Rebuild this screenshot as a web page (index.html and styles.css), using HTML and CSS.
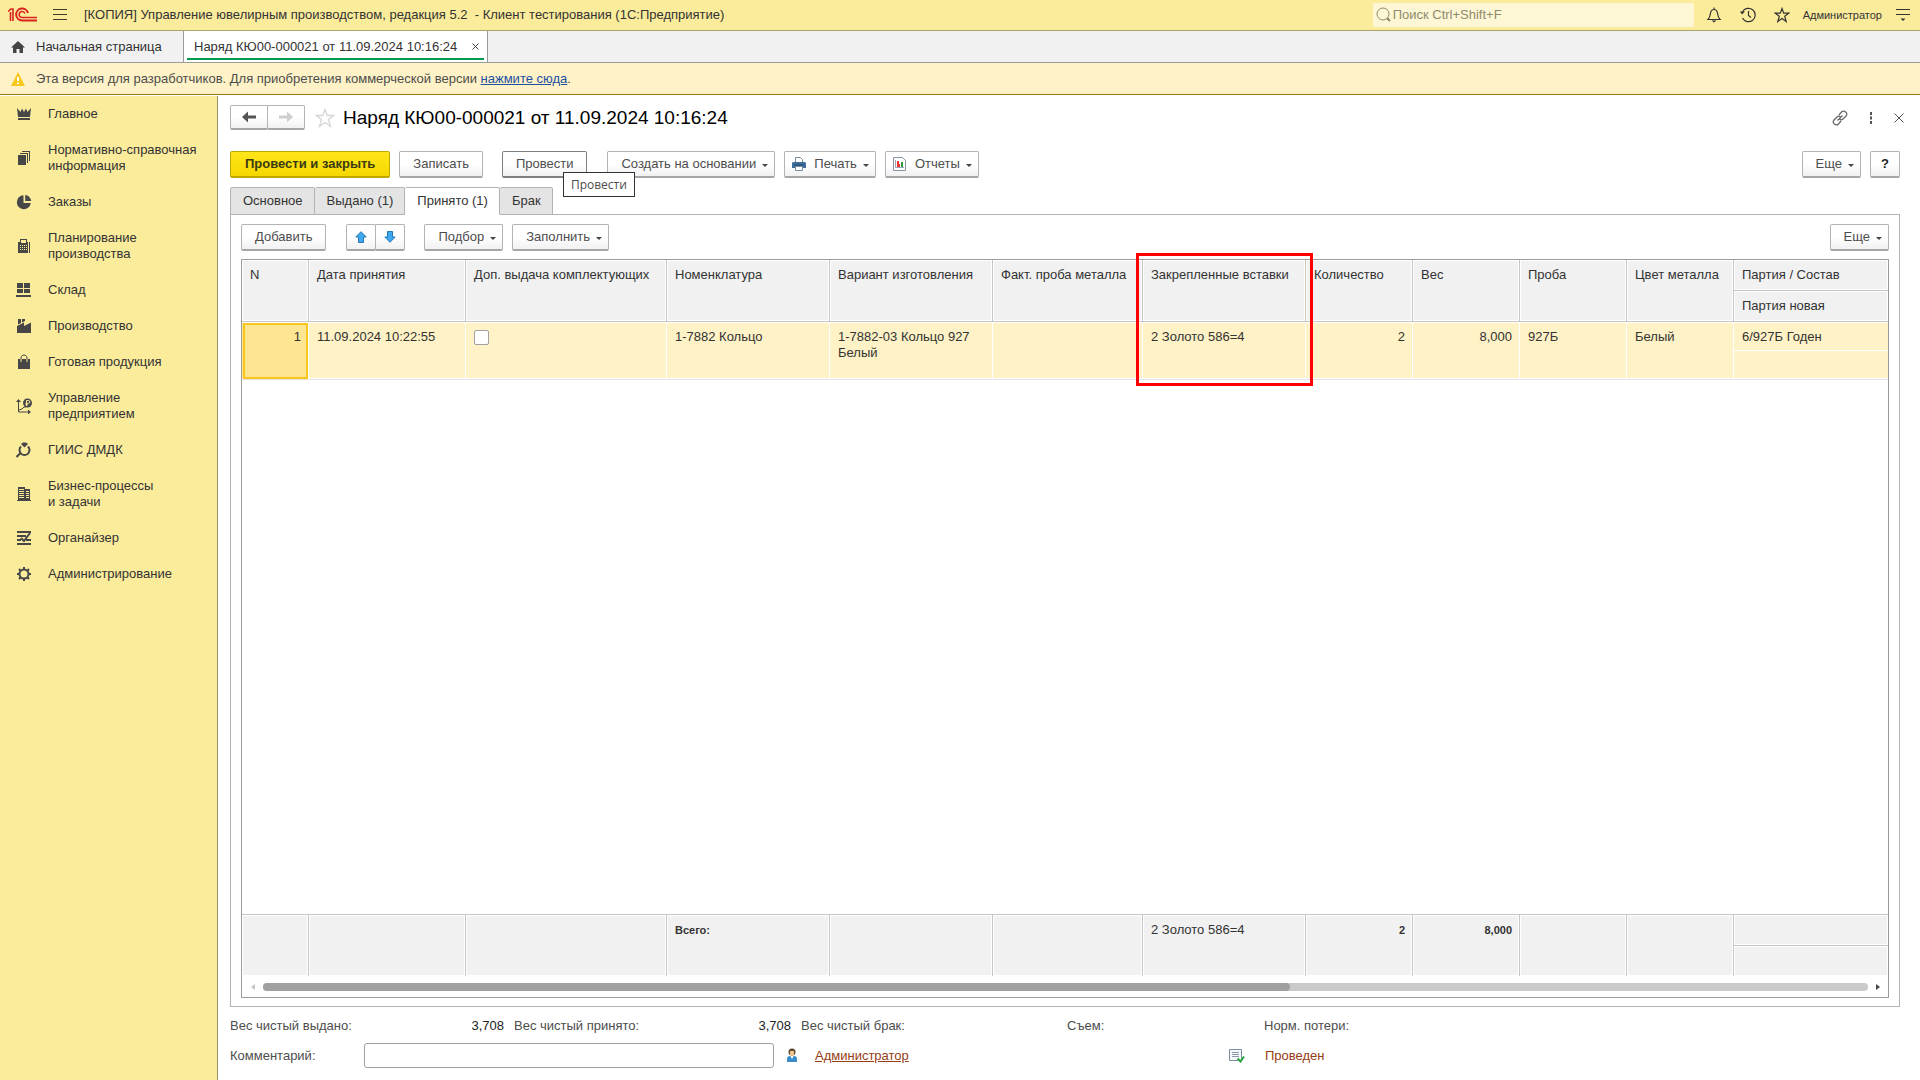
FILE: index.html
```html
<!DOCTYPE html>
<html lang="ru">
<head>
<meta charset="utf-8">
<title>Наряд КЮ00-000021 от 11.09.2024 10:16:24</title>
<link rel="stylesheet" href="styles.css">
</head>
<body>
<header class="topbar">
  <svg class="logo" width="30" height="16" viewBox="0 0 30 16" fill="none" stroke="#d8231f" stroke-width="2"><path d="M0 4.500 3 2h2v12M2.500 5V14" stroke-width="1.600"/><path d="M20 6A6 6 0 1 0 14 13.500H29"/><path d="M17 6.500A3 3 0 1 0 14 10.500H29" stroke-width="1.500"/></svg>
  <button class="icon-btn menu-btn" aria-label="Меню"><svg width="14" height="12" viewBox="0 0 14 12" stroke="#3c3a28"><path d="M0 .5h14M0 5.500h14M0 10.500h14"/></svg></button>
  <div class="app-title">[КОПИЯ] Управление ювелирным производством, редакция 5.2&nbsp; - Клиент тестирования&nbsp;(1С:Предприятие)</div>
  <label class="search">
    <svg width="16" height="16" viewBox="0 0 16 16" fill="none" stroke="#8f8a6c"><circle cx="8" cy="7" r="6"/><path d="m12 11 3 3" stroke-width="2.200"/></svg>
    <input type="text" placeholder="Поиск Ctrl+Shift+F" aria-label="Поиск">
  </label>
  <div class="top-actions">
    <button class="icon-btn" aria-label="Уведомления"><svg width="16" height="16" viewBox="0 0 16 16" fill="none" stroke="#333" stroke-width="1.200"><path d="M2 12.500C4 10.500 4 9 4.500 6 5 3.500 6 2.500 8 2.500s3 1 3.500 3.500c.5 3 .5 4.500 2.500 6.500zM8 .5v2"/><path d="M5.500 13.500h5L8 15.500z" fill="#333" stroke="none"/></svg></button>
    <button class="icon-btn" aria-label="История"><svg width="16" height="16" viewBox="0 0 16 16" fill="none" stroke="#333" stroke-width="1.200"><path d="M2.500 5A6.700 6.700 0 1 1 2.500 11M8.500 4v4.500l2.500 2"/><path d="M0 4.500h5L2 7.500z" fill="#333" stroke="none"/></svg></button>
    <button class="icon-btn" aria-label="Избранное"><svg width="16" height="16" viewBox="0 0 16 16" fill="none" stroke="#333" stroke-width="1.200"><path d="m8 1.500 1.700 4.700h5l-4 3 1.500 5.300L8 11.500l-4.200 3 1.500-5.300-4-3h5z"/></svg></button>
    <button class="user-btn">Администратор</button>
    <button class="icon-btn" aria-label="Настройки"><svg width="14" height="14" viewBox="0 0 14 14" stroke="#333"><path d="M0 1.500h14M0 6.500h14"/><path d="M4.500 10.500h5L7 13z" fill="#333" stroke="none"/></svg></button>
  </div>
</header>

<nav class="window-tabs">
  <a class="window-tab home" href="#"><svg width="14" height="12" viewBox="0 0 14 12" fill="#444"><path d="M7 0 0 6.500h2V12h3.500V8h3v4H12V6.500h2z"/></svg>Начальная страница</a>
  <div class="window-tab current"><a href="#">Наряд КЮ00-000021 от 11.09.2024 10:16:24</a><button class="icon-btn" aria-label="Закрыть вкладку"><svg width="7" height="7" viewBox="0 0 7 7" stroke="#444"><path d="m.5.5 6 6m0-6-6 6"/></svg></button></div>
</nav>

<div class="notice">
  <svg width="14" height="14" viewBox="0 0 14 14"><path d="M7 0 14 14H0z" fill="#f9c81e"/><path d="M6 5h2v4H6zM6 10.500h2v1.500H6z" fill="#fff"/></svg>
  <span>Эта версия для разработчиков. Для приобретения коммерческой версии <a href="#">нажмите сюда</a>.</span>
</div>

<div class="workspace">
  <nav class="sidebar">
    <a href="#"><svg width="16" height="16" viewBox="0 0 16 16"><path d="m1 2 3.500 4L6 2.500 8 6l2-3.500L11.500 6 15 2l-1 9H2zM2 12h12v2H2z"/></svg>Главное</a>
    <a href="#"><svg width="16" height="16" viewBox="0 0 16 16"><path d="M2 5h8v10H2zM4 3h8v10h-1V4H4zM6 1h8v10h-1V2H6z"/></svg>Нормативно-справочная<br>информация</a>
    <a href="#"><svg width="16" height="16" viewBox="0 0 16 16"><path d="M7.500 1.200A7 7 0 1 0 14.800 9H7.500zM9.200 1v6h6A6.500 6.500 0 0 0 9.200 1z"/></svg>Заказы</a>
    <a href="#"><svg width="16" height="16" viewBox="0 0 16 16"><path fill-rule="evenodd" d="M4 1h7v3h1v11H2V4h2zm1 1v3h5V2zM4 7v1h1V7zm2 0v1h1V7zm2 0v1h1V7zm2 0v1h1V7zM4 9v1h1V9zm2 0v1h1V9zm2 0v1h1V9zm2 0v1h1V9zm-6 2v1h1v-1zm2 0v1h1v-1zm2 0v1h1v-1zm2 0v1h1v-1zM13 4h1v11h-1z"/></svg>Планирование<br>производства</a>
    <a href="#"><svg width="16" height="16" viewBox="0 0 16 16"><path d="M1 1h6v5H1zM8 1h6v5H8zM1 7h6v4H1zM8 7h6v4H8zM0 13h15v2H0z"/></svg>Склад</a>
    <a href="#"><svg width="16" height="16" viewBox="0 0 16 16"><path d="M1 15V8l7-3.500V8l7-3.500V15zM2 1h3v4L2 6.500zM6 1h3v2L6 4.500z"/></svg>Производство</a>
    <a href="#"><svg width="16" height="16" viewBox="0 0 16 16"><path d="M2 5h12v10H2z"/><path d="M5 7V4c0-4 6-4 6 0v3" fill="none" stroke="#474747"/><path d="M5 5v3M11 5v3" stroke="#fbec9c" fill="none"/></svg>Готовая продукция</a>
    <a href="#"><svg width="16" height="16" viewBox="0 0 16 16"><path d="m2.500 1 2.500 3H0zM15 14l-3 2.500V11.500z"/><path d="M2.500 3v11H13M3 12l3-1 2-2h2" fill="none" stroke="#474747"/><circle cx="11.500" cy="5" r="4.500"/><path d="M10.500 8V2.500h2a1.200 1.200 0 0 1 0 2.800h-3M9.500 6.800H12" fill="none" stroke="#fbec9c"/></svg>Управление<br>предприятием</a>
    <a href="#"><svg width="16" height="16" viewBox="0 0 16 16"><path d="M5 2l2-1.500h3L12 2 8.500 5.500z"/><path d="M5 4.500a5 5 0 1 0 7 0M4 11.500.5 15" fill="none" stroke="#474747" stroke-width="2"/></svg>ГИИС ДМДК</a>
    <a href="#"><svg width="16" height="16" viewBox="0 0 16 16"><path fill-rule="evenodd" d="M2 1h7v13H2zm1 2v1h5V3zm0 2v1h5V5zm0 2v1h5V7zm0 2v1h5V9zm0 2v1h5v-1zM9 3h5v11H9zm1 2v1h3V5zm0 2v1h3V7zm0 2v1h3V9zm0 2v1h3v-1zM1 14h14v1H1z"/></svg>Бизнес-процессы<br>и задачи</a>
    <a href="#"><svg width="16" height="16" viewBox="0 0 16 16"><path d="M1 1h14v2H1zM1 5h9v2H1zM1 9h4v2H1zM10 9h5v2h-5zM1 13h14v2H1z"/><path d="m5 8 3 3 6-8" fill="none" stroke="#474747" stroke-width="2"/></svg>Органайзер</a>
    <a href="#"><svg width="16" height="16" viewBox="0 0 16 16"><g fill="none" stroke="#474747" stroke-width="2"><circle cx="8" cy="8" r="4.500"/><path d="M8 1v2.500M8 12.500V15M1 8h2.500M12.500 8H15M3 3l2 2M11 11l2 2M13 3l-2 2M5 11l-2 2"/></g></svg>Администрирование</a>
  </nav>

  <main class="form">
    <div class="form-head">
      <div class="button-pair nav-pair">
        <button class="btn" aria-label="Назад"><svg width="14" height="12" viewBox="0 0 14 12" fill="#555"><path d="M0 6 6 .5V4.500h8v3H6v4z"/></svg></button>
        <button class="btn" aria-label="Вперед"><svg width="14" height="12" viewBox="0 0 14 12" fill="#cfcfcf"><path d="M14 6 8 .5V4.500H0v3h8v4z"/></svg></button>
      </div>
      <button class="icon-btn" aria-label="В избранное"><svg width="20" height="20" viewBox="0 0 20 20" fill="none" stroke="#d6d6d6" stroke-width="1.300"><path d="m10 1.500 2.200 6h6.300l-5 4 2 6.800L10 14.500l-5.500 3.800 2-6.800-5-4h6.300z"/></svg></button>
      <h1>Наряд КЮ00-000021 от 11.09.2024 10:16:24</h1>
      <div class="head-tools">
        <button class="icon-btn" aria-label="Ссылка"><svg width="16" height="16" viewBox="0 0 16 16" fill="none" stroke="#666" stroke-width="1.200"><path d="m7 5 2.500-3c2.500-2.500 7 1 4.500 4l-3 3c-1 1-2.500 1-3.500 0M9 11l-2.500 3C4 16.500-.5 13 2 10l3-3c1-1 2.500-1 3.500 0M5.500 10.500l5-5"/></svg></button>
        <button class="icon-btn" aria-label="Дополнительно"><svg width="4" height="12" viewBox="0 0 4 12" fill="#555"><path d="M1 0h2v3H1zM1 4.500h2v3H1zM1 9h2v3H1z"/></svg></button>
        <button class="icon-btn" aria-label="Закрыть"><svg width="10" height="10" viewBox="0 0 10 10" stroke="#555"><path d="m.5.5 9 9m0-9-9 9"/></svg></button>
      </div>
    </div>

    <div class="commands">
      <button class="btn primary">Провести и закрыть</button>
      <button class="btn">Записать</button>
      <div class="post"><button class="btn hovered" aria-describedby="tip">Провести</button><div class="tooltip" role="tooltip" id="tip">Провести</div></div>
      <button class="btn drop">Создать на основании</button>
      <button class="btn drop with-icon"><svg width="14" height="14" viewBox="0 0 14 14"><path d="M3.500 5V.5h5l2 2V5" fill="#fff" stroke="#7a8ca0"/><path d="M1 5h12l1 1v5H0V6z" fill="#3f6d9c"/><path d="M2 8h10" stroke="#1f4468"/><path d="M3.500 9.500h7v4h-7z" fill="#fff" stroke="#7a8ca0"/></svg>Печать</button>
      <button class="btn drop with-icon"><svg width="14" height="14" viewBox="0 0 14 14"><path d="M.5.5h9l3 3v10H.5z" fill="#fff" stroke="#8593a3"/><path d="M2.500 3v7.500H11" fill="none" stroke="#9aa6b3"/><path d="M4 4h2v6H4z" fill="#e33"/><path d="M6 7h1v3H6z" fill="#e33"/><path d="M8 5h2v5H8z" fill="#2a9a3a"/></svg>Отчеты</button>
      <button class="btn drop push">Еще</button>
      <button class="btn help">?</button>
    </div>

    <div class="page-tabs" role="tablist">
      <button role="tab">Основное</button><button role="tab">Выдано (1)</button><button role="tab" aria-selected="true">Принято (1)</button><button role="tab">Брак</button>
    </div>

    <section class="page">
      <div class="table-tools">
        <button class="btn">Добавить</button>
        <div class="button-pair move-pair">
          <button class="btn" aria-label="Вверх"><svg width="12" height="12" viewBox="0 0 12 12" fill="#3fa9f0" stroke="#2477b3"><path d="m6 .7 5.200 5.300H8.500v5.500h-5V6H.8z"/></svg></button>
          <button class="btn" aria-label="Вниз"><svg width="12" height="12" viewBox="0 0 12 12" fill="#3fa9f0" stroke="#2477b3"><path d="M6 11.300.8 6h2.700V.5h5V6h2.700z"/></svg></button>
        </div>
        <button class="btn drop">Подбор</button>
        <button class="btn drop">Заполнить</button>
        <button class="btn drop push">Еще</button>
      </div>

      <div class="grid">
        <div class="grid-body">
        <table>
          <colgroup><col class="c-n"><col class="c-date"><col class="c-extra"><col class="c-item"><col class="c-item"><col class="c-fact"><col class="c-item"><col class="c-num"><col class="c-num"><col class="c-num"><col class="c-num"><col></colgroup>
          <thead>
            <tr><th rowspan="2">N</th><th rowspan="2">Дата принятия</th><th rowspan="2">Доп. выдача комплектующих</th><th rowspan="2">Номенклатура</th><th rowspan="2">Вариант изготовления</th><th rowspan="2">Факт. проба металла</th><th rowspan="2" class="marked">Закрепленные вставки<span class="marker"></span></th><th rowspan="2">Количество</th><th rowspan="2">Вес</th><th rowspan="2">Проба</th><th rowspan="2">Цвет металла</th><th>Партия / Состав</th></tr>
            <tr><th>Партия новая</th></tr>
          </thead>
          <tbody>
            <tr><td rowspan="2" class="num active">1</td><td rowspan="2">11.09.2024 10:22:55</td><td rowspan="2"><input type="checkbox" aria-label="Доп. выдача комплектующих"></td><td rowspan="2">1-7882 Кольцо</td><td rowspan="2">1-7882-03 Кольцо 927 Белый</td><td rowspan="2"></td><td rowspan="2">2 Золото 586=4</td><td rowspan="2" class="num">2</td><td rowspan="2" class="num">8,000</td><td rowspan="2">927Б</td><td rowspan="2">Белый</td><td class="upper">6/927Б Годен</td></tr>
            <tr><td class="lower"></td></tr>
            <tr class="filler"><td colspan="12"></td></tr>
          </tbody>
          <tfoot>
            <tr><td rowspan="2"></td><td rowspan="2"></td><td rowspan="2"></td><td rowspan="2" class="total">Всего:</td><td rowspan="2"></td><td rowspan="2"></td><td rowspan="2">2 Золото 586=4</td><td rowspan="2" class="num total">2</td><td rowspan="2" class="num total">8,000</td><td rowspan="2"></td><td rowspan="2"></td><td></td></tr>
            <tr><td></td></tr>
          </tfoot>
        </table>
        </div>
        <div class="scroll">
          <svg width="4" height="6" viewBox="0 0 4 6" fill="#c4c4c4"><path d="M4 0v6L0 3z"/></svg>
          <div class="track"><div class="thumb"></div></div>
          <svg width="4" height="6" viewBox="0 0 4 6" fill="#444"><path d="M0 0v6l4-3z"/></svg>
        </div>
      </div>
    </section>

    <footer class="summary">
      <dl class="weights">
        <div><dt>Вес чистый выдано:</dt><dd>3,708</dd></div>
        <div><dt>Вес чистый принято:</dt><dd>3,708</dd></div>
        <div><dt>Вес чистый брак:</dt><dd></dd></div>
        <div><dt>Съем:</dt><dd></dd></div>
        <div><dt>Норм. потери:</dt><dd></dd></div>
      </dl>
      <div class="comment-row">
        <label for="comment">Комментарий:</label>
        <input type="text" id="comment">
        <a class="author" href="#"><svg width="10" height="16" viewBox="0 0 10 16"><circle cx="5" cy="4" r="3.500" fill="#5a4630"/><path d="M3 3h4v4.500H3z" fill="#f2c48c"/><path d="M0 14V11q0-3 3-3h4q3 0 3 3v3z" fill="#3a8fc8"/><path d="m3.500 8 1.500 3 1.500-3z" fill="#fff"/></svg><span>Администратор</span></a>
        <div class="status"><svg width="16" height="14" viewBox="0 0 16 14"><path d="M.5.5h12v11H.5z" fill="#f5f8fb" stroke="#7c8ea3"/><path d="M3 3.500h7M3 5.500h7M3 7.500h7" stroke="#8c9aab"/><path d="m8.500 9.500 3 3L15 7.500" fill="none" stroke="#27a53a" stroke-width="2"/></svg><span>Проведен</span></div>
      </div>
    </footer>
  </main>
</div>
</body>
</html>
```
FILE: styles.css
```css
* { box-sizing: border-box; }
html, body { height: 100%; }
body {
  margin: 0;
  display: flex;
  flex-direction: column;
  font: 13px/16px "Liberation Sans", Arial, sans-serif;
  color: #333;
  background: #fff;
}
svg { display: block; flex: none; }
button, input { font: inherit; color: inherit; }
.icon-btn, .user-btn { padding: 0; border: 0; background: none; }

.topbar {
  display: flex;
  align-items: center;
  height: 31px;
  padding: 0 10px 0 8px;
  background: #fbec9c;
  border-bottom: 1px solid #aaa46c;
}
.menu-btn { margin: 0 17px 0 15px; }
.app-title { flex: 1; white-space: nowrap; }
.search {
  display: flex;
  align-items: center;
  gap: 2px;
  width: 321px;
  height: 24px;
  padding: 0 2px;
  border-radius: 2px;
  background: #fdf7d6;
}
.search input { flex: 1; min-width: 0; padding: 0; border: 0; background: none; outline: 0; }
.search input::placeholder { color: #8f8a6c; opacity: 1; }
.top-actions { display: flex; align-items: center; gap: 18px; margin-left: 12px; }
.user-btn { font-size: 11px; margin: 0 -4px 0 -5px; }

.window-tabs { display: flex; height: 32px; background: #f1f1f1; border-bottom: 1px solid #9c9c9c; }
.window-tab { display: flex; align-items: center; color: #333; }
.window-tab a { color: inherit; text-decoration: none; }
.window-tab.home { width: 184px; gap: 11px; padding-left: 11px; border-right: 1px solid #9c9c9c; text-decoration: none; white-space: nowrap; }
.window-tab.current {
  position: relative;
  gap: 15px;
  padding: 0 8px 0 10px;
  background: #fff;
  border-right: 1px solid #9c9c9c;
}
.window-tab.current::after { content: ""; position: absolute; left: 3px; right: 3px; bottom: 2px; height: 2px; background: #009a4e; }

.notice {
  display: flex;
  align-items: center;
  gap: 11px;
  height: 32px;
  padding-left: 11px;
  color: #4d4d4d;
  background: #fef2c6;
  border-bottom: 1px solid #96780f;
}
.notice a { color: #1d4fa3; }

.workspace { flex: 1; display: flex; min-height: 0; padding-top: 1px; }
.sidebar { width: 218px; background: #fbec9c; border-right: 1px solid #9a916a; }
.sidebar a {
  display: grid;
  grid-template-columns: 16px 1fr;
  column-gap: 16px;
  align-items: center;
  padding: 10px 0 10px 16px;
  color: #333;
  text-decoration: none;
}
.sidebar svg { fill: #474747; grid-row: 1 / span 2; }

.form { flex: 1; min-width: 0; display: flex; flex-direction: column; padding: 9px 20px 12px 12px; }
.form-head { display: flex; align-items: center; height: 25px; }
.form-head h1 { margin: 0 0 0 8px; font-size: 19px; line-height: 24px; font-weight: 400; color: #000; }
.head-tools { display: flex; align-items: center; gap: 21px; margin: 0 -4px 0 auto; }

.btn {
  display: flex;
  align-items: center;
  justify-content: center;
  height: 27px;
  padding: 0 13px;
  border: 1px solid #b3b3b3;
  border-bottom: 2px solid #a6a6a6;
  border-radius: 2px;
  color: #4d4d4d;
  background: linear-gradient(#fff 50%, #f1f1f1);
  white-space: nowrap;
}
.btn.primary { padding: 0 14px; font-weight: 700; color: #3c3a10; background: linear-gradient(#ffe61a, #f5d800); border-color: #bfa600; }
.btn.hovered { border-color: #808080; }
.btn.help { width: 30px; padding: 0; font-weight: 700; color: #222; }
.btn.drop { padding-right: 6px; }
.btn.drop::after { content: ""; margin: 3px 0 0 6px; border: 3px solid transparent; border-top-color: #444; border-bottom: 0; }
.btn.with-icon { padding-left: 7px; }
.btn.with-icon svg { margin-right: 8px; }
.push { margin-left: auto; }
.button-pair { display: flex; }
.button-pair .btn + .btn { margin-left: -1px; }
.nav-pair { margin-right: 10px; }
.nav-pair .btn { width: 38px; height: 25px; padding: 0; }
.move-pair .btn { width: 30px; padding: 0; }

.commands { display: flex; gap: 9px; margin-top: 21px; }
.post { position: relative; margin: 0 11px 0 10px; }
.tooltip {
  position: absolute;
  left: 61px;
  top: 21px;
  z-index: 2;
  padding: 4px 7px 3px;
  border: 1px solid #333;
  background: #fff;
  font: 12px/16px "Open Sans", sans-serif;
  color: #4d4d4d;
}

.page-tabs { position: relative; z-index: 1; display: flex; margin-top: 9px; }
.page-tabs button {
  height: 28px;
  padding: 0 11px 0 12px;
  border: 1px solid #b3b3b3;
  border-left-width: 0;
  border-radius: 2px 2px 0 0;
  background: #e4e4e4;
}
.page-tabs button:first-child { border-left-width: 1px; }
.page-tabs button[aria-selected="true"] { background: #fff; border-bottom-color: #fff; }

.page {
  flex: 1;
  min-height: 0;
  display: flex;
  flex-direction: column;
  gap: 8px;
  margin-top: -1px;
  padding: 9px 10px 8px;
  border: 1px solid #b3b3b3;
}
.table-tools { display: flex; gap: 9px; }
.move-pair { margin: 0 10px 0 11px; }

.grid { flex: 1; min-height: 0; display: flex; flex-direction: column; border: 1px solid #9c9c9c; }
.grid-body { flex: 1; min-height: 0; }
table { width: 100%; height: 100%; table-layout: fixed; border-collapse: separate; border-spacing: 0; }
.c-n { width: 67px; }
.c-date { width: 157px; }
.c-extra { width: 201px; }
.c-item { width: 163px; }
.c-fact { width: 150px; }
.c-num { width: 107px; }
th, td { padding: 7px 7px 0 8px; vertical-align: top; text-align: left; font-weight: 400; overflow-wrap: break-word; }
th { height: 31px; white-space: nowrap; background: #f1f1f1; border: solid #c6c6c6; border-width: 0 1px 1px 0; box-shadow: inset 0 0 0 1px #fff; }
tbody td { height: 29px; background: #fef2c6; border: solid #fff; border-width: 0 1px 1px 0; border-bottom-color: #e2e2e2; box-shadow: inset 0 1px #fff, inset 0 -1px #fff; }
tbody td.upper { border-bottom-color: #fff; box-shadow: inset 0 1px #fff; }
tbody td.lower { box-shadow: inset 0 -1px #fff; }
tbody td.active { background: #fee591; outline: 2px solid #fac51c; outline-offset: -3px; }
.filler td { height: auto; background: none; border: 0; box-shadow: none; }
tfoot td { height: 31px; background: #f1f1f1; border: solid #c6c6c6; border-width: 1px 1px 0 0; box-shadow: inset 0 0 0 1px #fff; }
th:last-child, tbody td:last-child, tfoot td:last-child { border-right: 0; }
.num { text-align: right; }
.total { font-size: 11px; font-weight: 700; }
td input { display: block; appearance: none; width: 15px; height: 15px; margin: 1px 0 0; border: 1px solid #a0a0a0; border-radius: 2px; background: #fff; }
.marked { position: relative; }
.marker { position: absolute; z-index: 1; left: -7px; top: -7px; width: 177px; height: 133px; border: 3px solid #f00; }

.scroll { display: flex; align-items: center; gap: 8px; height: 21px; padding: 0 8px 0 9px; }
.track { flex: 1; height: 8px; border-radius: 4px; background: #cacaca; }
.thumb { width: 64%; height: 8px; border-radius: 4px; background: #a0a0a0; }

.summary { padding-top: 11px; color: #4d4d4d; }
.weights { display: grid; grid-template-columns: 274px 277px 256px 187px 1fr; column-gap: 10px; margin: 0; }
.weights div { display: flex; justify-content: space-between; white-space: nowrap; }
.weights dd { margin: 0; color: #222; }
.comment-row { display: grid; grid-template-columns: 134px 410px 442px 1fr; align-items: center; margin-top: 9px; }
.comment-row input { width: 100%; height: 25px; border: 1px solid #a0a0a0; border-radius: 3px; background: #fff; }
.author, .status { display: flex; align-items: center; color: #963c14; }
.author { gap: 18px; padding-left: 13px; text-decoration: none; }
.author span { text-decoration: underline; }
.status { gap: 20px; padding-left: 13px; }
```
